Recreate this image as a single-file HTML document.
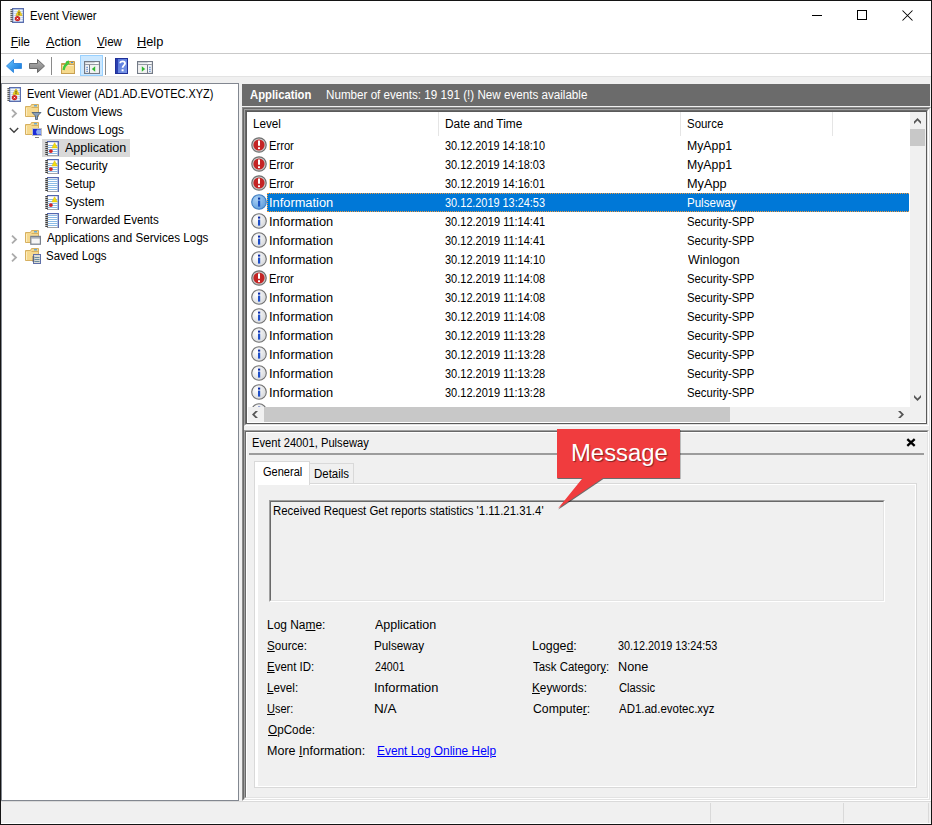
<!DOCTYPE html>
<html><head><meta charset="utf-8">
<style>
*{margin:0;padding:0;box-sizing:border-box}
html,body{width:932px;height:825px;overflow:hidden;background:#fff}
body{position:relative;font-family:"Liberation Sans",sans-serif;font-size:12px;color:#000}
.a{position:absolute}
svg{position:absolute;overflow:visible}
.t{position:absolute;white-space:pre;line-height:14px;transform-origin:0 0}
.ul{text-decoration:underline;text-underline-offset:1px}
</style></head><body>

<!-- ============ window chrome ============ -->
<div class="a" style="left:0;top:0;width:932px;height:825px;border:1px solid #141414"></div>
<!-- title icon -->
<svg style="left:10px;top:8px" width="14" height="15" viewBox="0 0 14 15">
  <rect x="2.6" y="0.6" width="10.8" height="13.8" fill="#c9daf2" stroke="#5a6eae" stroke-width="1.2"/>
  <path d="M3.8 2.5h8.8M3.8 4.5h8.8M3.8 6.5h8.8M3.8 8.5h8.8M3.8 10.5h8.8M3.8 12.5h8.8" stroke="#f2f6fc" stroke-width="1"/>
  <path d="M0.4 1.5h2.2M0.4 3.5h2.2M0.4 5.5h2.2M0.4 7.5h2.2M0.4 9.5h2.2M0.4 11.5h2.2M0.4 13.5h2.2" stroke="#5c5c5c" stroke-width="1"/>
  <path d="M0.4 2.5h2M0.4 4.5h2M0.4 6.5h2M0.4 8.5h2M0.4 10.5h2M0.4 12.5h2" stroke="#c8c8c8" stroke-width="1"/>
  <path d="M9 1.9C9.4 1.9 12.3 7.2 12.1 7.5H5.9C5.7 7.2 8.6 1.9 9 1.9Z" fill="#efcf1a" stroke="#c49e00" stroke-width=".5"/>
  <path d="M9 3.8v1.9" stroke="#3a3a1a" stroke-width="1"/><rect x="8.5" y="6.1" width="1" height=".9" fill="#3a3a1a"/>
  <circle cx="7.5" cy="10.6" r="2.7" fill="#cf2424"/>
  <path d="M6.8 9.9l1.4 1.4M8.2 9.9l-1.4 1.4" stroke="#fff" stroke-width=".9"/>
</svg>
<!-- window controls -->
<div class="a" style="left:812px;top:15px;width:10px;height:1px;background:#000"></div>
<div class="a" style="left:857px;top:10px;width:10px;height:10px;border:1px solid #000"></div>
<svg style="left:902px;top:10px" width="11" height="11" viewBox="0 0 11 11"><path d="M0.5 0.5L10.5 10.5M10.5 0.5L0.5 10.5" stroke="#000" stroke-width="1.05" fill="none"/></svg>

<!-- menu separator -->
<div class="a" style="left:1px;top:53px;width:930px;height:1px;background:#c9c9c9"></div>

<!-- toolbar icons -->
<svg style="left:6px;top:59px" width="17" height="15" viewBox="0 0 17 15">
  <defs><linearGradient id="gb" x1="0" y1="0" x2="1" y2="1"><stop offset="0" stop-color="#6cc7ff"/><stop offset="1" stop-color="#0a6fd6"/></linearGradient></defs>
  <path d="M0.5 7L7.5 0.5V4.5H15.5V9.5H7.5V13.5Z" fill="url(#gb)" stroke="#3b8ee0" stroke-width="1"/>
</svg>
<svg style="left:29px;top:59px" width="17" height="15" viewBox="0 0 17 15">
  <defs><linearGradient id="gg" x1="0" y1="0" x2="0" y2="1"><stop offset="0" stop-color="#b5b5b5"/><stop offset="1" stop-color="#7a7a7a"/></linearGradient></defs>
  <path d="M15.5 7L8.5 0.5V4.5H0.5V9.5H8.5V13.5Z" fill="url(#gg)" stroke="#6a6a6a" stroke-width="1"/>
</svg>
<div class="a" style="left:51px;top:57px;width:1px;height:18px;background:#8a8a8a"></div>
<svg style="left:61px;top:60px" width="15" height="15" viewBox="0 0 15 15">
  <path d="M0.5 3.5H5.5V1.5H13.5V13.5H0.5Z" fill="#e9c56c" stroke="#c39a4c"/>
  <rect x="0.5" y="4.5" width="13" height="9" fill="#f6da8e" stroke="#c8a052"/>
  <path d="M1.5 5.5H12.5" stroke="#fcedc4"/>
  <path d="M10 2.5H12" stroke="#3d8fe0" stroke-width="1.2"/>
  <path d="M2.6 10C3 6.8 4.6 4.6 6.6 3.6" stroke="#3cc83c" stroke-width="2.3" fill="none"/>
  <path d="M4.2 2.6L7.6 0.3L8.6 4.6Z" fill="#3cc83c"/>
</svg>
<div class="a" style="left:80px;top:55px;width:23px;height:21px;background:#cce8ff;border:1px solid #99d1ff"></div>
<svg style="left:84px;top:61px" width="16" height="13" viewBox="0 0 16 13">
  <rect x="0.6" y="0.6" width="14.8" height="11.8" fill="#fff" stroke="#737a86" stroke-width="1.2"/>
  <path d="M1.2 1.7H10.5" stroke="#c8ccd2" stroke-width="1.2"/>
  <path d="M11.5 1.7h1M13.5 1.7h1" stroke="#fff" stroke-width="1"/>
  <path d="M1.2 3.6H14.8" stroke="#8a909a" stroke-width="1"/>
  <path d="M5.5 4V12" stroke="#737a86" stroke-width="1.1"/>
  <path d="M2.3 6.3h1.6M2.3 8.3h1.6M2.3 10.3h1.6" stroke="#3a6fc0" stroke-width="1.1"/>
  <path d="M6.2 4.2H14.8V11.8H6.2Z" fill="#f2f2f2"/>
  <path d="M11.2 5.3V10.8L7.8 8.05Z" fill="#30b830"/>
</svg>
<div class="a" style="left:105px;top:57px;width:1px;height:18px;background:#8a8a8a"></div>
<svg style="left:115px;top:58px" width="13" height="16" viewBox="0 0 13 16">
  <defs><linearGradient id="gh" x1="0" y1="0" x2="1" y2="1"><stop offset="0" stop-color="#4d6fd8"/><stop offset="1" stop-color="#7d9ae8"/></linearGradient></defs>
  <rect x="0" y="0" width="13" height="16" fill="url(#gh)"/>
  <rect x="0" y="0" width="3" height="16" fill="#2a3fb0"/>
  <rect x="0.5" y="0.5" width="12" height="15" fill="none" stroke="#1f2f98" stroke-width="1"/>
  <path d="M5.2 5.2C5.2 2.7 10 2.7 10 5.4C10 7.4 7.6 7.4 7.6 9.8" stroke="#fff" stroke-width="1.8" fill="none"/>
  <rect x="6.6" y="11.3" width="2" height="2" fill="#fff"/>
</svg>
<svg style="left:137px;top:61px" width="16" height="13" viewBox="0 0 16 13">
  <rect x="0.6" y="0.6" width="14.8" height="11.8" fill="#fff" stroke="#737a86" stroke-width="1.2"/>
  <path d="M1.2 1.7H10.5" stroke="#c8ccd2" stroke-width="1.2"/>
  <path d="M11.5 1.7h1M13.5 1.7h1" stroke="#fff" stroke-width="1"/>
  <path d="M1.2 3.6H14.8" stroke="#8a909a" stroke-width="1"/>
  <path d="M10.5 4V12" stroke="#737a86" stroke-width="1.1"/>
  <path d="M12.1 6.3h1.6M12.1 8.3h1.6M12.1 10.3h1.6" stroke="#3a6fc0" stroke-width="1.1"/>
  <path d="M1.2 4.2H9.9V11.8H1.2Z" fill="#f2f2f2"/>
  <path d="M4.8 5.3V10.8L8.2 8.05Z" fill="#30b830"/>
</svg>

<!-- grey client background -->
<div class="a" style="left:1px;top:76px;width:930px;height:748px;background:#f0f0f0"></div>
<div class="a" style="left:1px;top:76px;width:930px;height:1px;background:#e3e3e3"></div>

<!-- ============ tree pane ============ -->
<div class="a" style="left:1px;top:83px;width:238px;height:718px;border:1px solid #828790;background:#fff"></div>
<div class="a" style="left:42px;top:139px;width:88px;height:18px;background:#d9d9d9"></div>
<!-- root icon -->
<svg style="left:7px;top:87px" width="14" height="15" viewBox="0 0 14 15">
  <rect x="2.6" y="0.6" width="10.8" height="13.8" fill="#c9daf2" stroke="#5a6eae" stroke-width="1.2"/>
  <path d="M3.8 2.5h8.8M3.8 4.5h8.8M3.8 6.5h8.8M3.8 8.5h8.8M3.8 10.5h8.8M3.8 12.5h8.8" stroke="#f2f6fc" stroke-width="1"/>
  <path d="M0.4 1.5h2.2M0.4 3.5h2.2M0.4 5.5h2.2M0.4 7.5h2.2M0.4 9.5h2.2M0.4 11.5h2.2M0.4 13.5h2.2" stroke="#5c5c5c" stroke-width="1"/>
  <path d="M0.4 2.5h2M0.4 4.5h2M0.4 6.5h2M0.4 8.5h2M0.4 10.5h2M0.4 12.5h2" stroke="#c8c8c8" stroke-width="1"/>
  <path d="M9 1.9C9.4 1.9 12.3 7.2 12.1 7.5H5.9C5.7 7.2 8.6 1.9 9 1.9Z" fill="#efcf1a" stroke="#c49e00" stroke-width=".5"/>
  <path d="M9 3.8v1.9" stroke="#3a3a1a" stroke-width="1"/><rect x="8.5" y="6.1" width="1" height=".9" fill="#3a3a1a"/>
  <circle cx="7.5" cy="10.6" r="2.7" fill="#cf2424"/>
  <path d="M6.8 9.9l1.4 1.4M8.2 9.9l-1.4 1.4" stroke="#fff" stroke-width=".9"/>
</svg>
<!-- chevrons -->
<svg style="left:11px;top:109px" width="7" height="9" viewBox="0 0 7 9"><path d="M1 0.7L5 4.5L1 8.3" stroke="#ababab" stroke-width="1.8" fill="none"/></svg>
<svg style="left:9px;top:127px" width="10" height="7" viewBox="0 0 10 7"><path d="M0.8 1L5 5.2L9.2 1" stroke="#404040" stroke-width="1.4" fill="none"/></svg>
<svg style="left:11px;top:235px" width="7" height="9" viewBox="0 0 7 9"><path d="M1 0.7L5 4.5L1 8.3" stroke="#ababab" stroke-width="1.8" fill="none"/></svg>
<svg style="left:11px;top:253px" width="7" height="9" viewBox="0 0 7 9"><path d="M1 0.7L5 4.5L1 8.3" stroke="#ababab" stroke-width="1.8" fill="none"/></svg>
<!-- folders -->
<svg style="left:25px;top:104px" width="17" height="17" viewBox="0 0 17 17">
  <path d="M0.5 2.5H5.5L6.5 0.5H13.5V12.5H0.5Z" fill="#f6d98e" stroke="#d6b060"/>
  <path d="M6.5 3.5H13.5" stroke="#d6b060"/><path d="M9 1.8H12" stroke="#4a9ee0" stroke-width="1.2"/>
  <path d="M1.5 4V12" stroke="#fcecc0"/>
  <path d="M7 8.5H16L12.5 12V15.5H10.5V12Z" fill="#8aa0b8" stroke="#4f6378" stroke-width=".9"/>
</svg>
<svg style="left:25px;top:122px" width="17" height="17" viewBox="0 0 17 17">
  <path d="M0.5 2.5H5.5L6.5 0.5H13.5V12.5H0.5Z" fill="#f6d98e" stroke="#d6b060"/>
  <path d="M6.5 3.5H13.5" stroke="#d6b060"/><path d="M9 1.8H12" stroke="#4a9ee0" stroke-width="1.2"/>
  <path d="M1.5 4V12" stroke="#fcecc0"/>
  <rect x="7.5" y="6.5" width="9" height="7" fill="#1a2ad8" stroke="#c0c0c0"/>
  <path d="M12 7.5H16V12.5H12L11 10Z" fill="#8aa8f0"/>
  <path d="M10 15.5H14" stroke="#808080"/>
</svg>
<svg style="left:25px;top:230px" width="17" height="17" viewBox="0 0 17 17">
  <path d="M0.5 2.5H5.5L6.5 0.5H13.5V12.5H0.5Z" fill="#f6d98e" stroke="#d6b060"/>
  <path d="M6.5 3.5H13.5" stroke="#d6b060"/><path d="M9 1.8H12" stroke="#4a9ee0" stroke-width="1.2"/>
  <path d="M1.5 4V12" stroke="#fcecc0"/>
  <rect x="5.8" y="6.4" width="9.6" height="7.8" fill="#f6f6f6" stroke="#79808c" stroke-width="1.2"/>
  <path d="M6.4 7.9H15" stroke="#79808c" stroke-width="1"/>
</svg>
<svg style="left:25px;top:248px" width="17" height="17" viewBox="0 0 17 17">
  <path d="M0.5 2.5H5.5L6.5 0.5H13.5V12.5H0.5Z" fill="#f6d98e" stroke="#d6b060"/>
  <path d="M6.5 3.5H13.5" stroke="#d6b060"/><path d="M9 1.8H12" stroke="#4a9ee0" stroke-width="1.2"/>
  <path d="M1.5 4V12" stroke="#fcecc0"/>
  <rect x="8.5" y="6.5" width="7" height="9" fill="#dcdcd4" stroke="#5f6fa8"/>
  <path d="M9.5 9.5h5M9.5 11.5h5M9.5 13.5h5" stroke="#6a8ca0"/>
  <path d="M7.3 9h2M7.3 11h2M7.3 13h2" stroke="#5a5a5a"/>
</svg>
<!-- log icons -->
<svg style="left:45px;top:141px" width="14" height="15" viewBox="0 0 14 15">
  <rect x="2" y="0" width="11" height="15" fill="#fff"/>
  <rect x="2" y="0" width="12" height="1.2" fill="#5266b0"/>
  <rect x="12.6" y="0" width="1.4" height="15" fill="#5a6cb4"/>
  <rect x="2" y="14" width="11" height="1" fill="#a0a4ac"/>
  <rect x="2" y="1" width="1" height="14" fill="#8a8a8a"/>
  <path d="M0.3 1.5h2.4M0.3 3.5h2.4M0.3 5.5h2.4M0.3 7.5h2.4M0.3 9.5h2.4M0.3 11.5h2.4M0.3 13.5h2.4" stroke="#3c3c3c" stroke-width="1"/>
  <path d="M0.3 2.5h2M0.3 4.5h2M0.3 6.5h2M0.3 8.5h2M0.3 10.5h2M0.3 12.5h2" stroke="#b8b8b8" stroke-width="1"/>
  <path d="M3 4.5h9.5M3 6.5h9.5M3 8.5h9.5M3 10.5h9.5M3 12.5h9.5" stroke="#8cbbe6" stroke-width="1"/>
  <path d="M9.6 1.7L12.3 6.9H6.9Z" fill="#f2de12" stroke="#d8b800" stroke-width=".5"/>
  <circle cx="5.9" cy="10.1" r="1.9" fill="#d42222"/>
</svg>
<svg style="left:45px;top:159px" width="14" height="15" viewBox="0 0 14 15">
  <rect x="2" y="0" width="11" height="15" fill="#fff"/>
  <rect x="2" y="0" width="12" height="1.2" fill="#5266b0"/>
  <rect x="12.6" y="0" width="1.4" height="15" fill="#5a6cb4"/>
  <rect x="2" y="14" width="11" height="1" fill="#a0a4ac"/>
  <rect x="2" y="1" width="1" height="14" fill="#8a8a8a"/>
  <path d="M0.3 1.5h2.4M0.3 3.5h2.4M0.3 5.5h2.4M0.3 7.5h2.4M0.3 9.5h2.4M0.3 11.5h2.4M0.3 13.5h2.4" stroke="#3c3c3c" stroke-width="1"/>
  <path d="M0.3 2.5h2M0.3 4.5h2M0.3 6.5h2M0.3 8.5h2M0.3 10.5h2M0.3 12.5h2" stroke="#b8b8b8" stroke-width="1"/>
  <path d="M3 4.5h9.5M3 6.5h9.5M3 8.5h9.5M3 10.5h9.5M3 12.5h9.5" stroke="#8cbbe6" stroke-width="1"/>
  <path d="M9.6 1.7L12.3 6.9H6.9Z" fill="#f2de12" stroke="#d8b800" stroke-width=".5"/>
  <circle cx="5.9" cy="10.1" r="1.9" fill="#d42222"/>
</svg>
<svg style="left:45px;top:177px" width="14" height="15" viewBox="0 0 14 15">
  <rect x="2" y="0" width="11" height="15" fill="#fff"/>
  <rect x="2" y="0" width="12" height="1.2" fill="#5266b0"/>
  <rect x="12.6" y="0" width="1.4" height="15" fill="#5a6cb4"/>
  <rect x="2" y="14" width="11" height="1" fill="#a0a4ac"/>
  <rect x="2" y="1" width="1" height="14" fill="#8a8a8a"/>
  <path d="M0.3 1.5h2.4M0.3 3.5h2.4M0.3 5.5h2.4M0.3 7.5h2.4M0.3 9.5h2.4M0.3 11.5h2.4M0.3 13.5h2.4" stroke="#3c3c3c" stroke-width="1"/>
  <path d="M0.3 2.5h2M0.3 4.5h2M0.3 6.5h2M0.3 8.5h2M0.3 10.5h2M0.3 12.5h2" stroke="#b8b8b8" stroke-width="1"/>
  <path d="M3 2.5h9.5M3 4.5h9.5M3 6.5h9.5M3 8.5h9.5M3 10.5h9.5M3 12.5h9.5" stroke="#8cbbe6" stroke-width="1"/>
</svg>
<svg style="left:45px;top:195px" width="14" height="15" viewBox="0 0 14 15">
  <rect x="2" y="0" width="11" height="15" fill="#fff"/>
  <rect x="2" y="0" width="12" height="1.2" fill="#5266b0"/>
  <rect x="12.6" y="0" width="1.4" height="15" fill="#5a6cb4"/>
  <rect x="2" y="14" width="11" height="1" fill="#a0a4ac"/>
  <rect x="2" y="1" width="1" height="14" fill="#8a8a8a"/>
  <path d="M0.3 1.5h2.4M0.3 3.5h2.4M0.3 5.5h2.4M0.3 7.5h2.4M0.3 9.5h2.4M0.3 11.5h2.4M0.3 13.5h2.4" stroke="#3c3c3c" stroke-width="1"/>
  <path d="M0.3 2.5h2M0.3 4.5h2M0.3 6.5h2M0.3 8.5h2M0.3 10.5h2M0.3 12.5h2" stroke="#b8b8b8" stroke-width="1"/>
  <path d="M3 4.5h9.5M3 6.5h9.5M3 8.5h9.5M3 10.5h9.5M3 12.5h9.5" stroke="#8cbbe6" stroke-width="1"/>
  <path d="M9.6 1.7L12.3 6.9H6.9Z" fill="#f2de12" stroke="#d8b800" stroke-width=".5"/>
  <circle cx="5.9" cy="10.1" r="1.9" fill="#d42222"/>
</svg>
<svg style="left:45px;top:213px" width="14" height="15" viewBox="0 0 14 15">
  <rect x="2" y="0" width="11" height="15" fill="#fff"/>
  <rect x="2" y="0" width="12" height="1.2" fill="#5266b0"/>
  <rect x="12.6" y="0" width="1.4" height="15" fill="#5a6cb4"/>
  <rect x="2" y="14" width="11" height="1" fill="#a0a4ac"/>
  <rect x="2" y="1" width="1" height="14" fill="#8a8a8a"/>
  <path d="M0.3 1.5h2.4M0.3 3.5h2.4M0.3 5.5h2.4M0.3 7.5h2.4M0.3 9.5h2.4M0.3 11.5h2.4M0.3 13.5h2.4" stroke="#3c3c3c" stroke-width="1"/>
  <path d="M0.3 2.5h2M0.3 4.5h2M0.3 6.5h2M0.3 8.5h2M0.3 10.5h2M0.3 12.5h2" stroke="#b8b8b8" stroke-width="1"/>
  <path d="M3 2.5h9.5M3 4.5h9.5M3 6.5h9.5M3 8.5h9.5M3 10.5h9.5M3 12.5h9.5" stroke="#8cbbe6" stroke-width="1"/>
</svg>

<!-- ============ right header ============ -->
<div class="a" style="left:242px;top:84px;width:688px;height:22px;background:#6b6b6b"></div>

<!-- ============ list frame ============ -->
<!-- container sunken edge x=242..930, y=107..800 -->
<div class="a" style="left:242px;top:107px;width:689px;height:694px;border-style:solid;border-width:1px;border-color:#8a8a8a #fff #fff #8a8a8a"></div>
<div class="a" style="left:243px;top:108px;width:687px;height:692px;border-style:solid;border-width:1px;border-color:#696969 #e3e3e3 #e3e3e3 #696969"></div>
<!-- list sunken edge x=244..928, y=109..425 -->
<div class="a" style="left:244px;top:109px;width:685px;height:317px;border-style:solid;border-width:1px;border-color:#a0a0a0 #fff #fff #a0a0a0"></div>
<div class="a" style="left:245px;top:110px;width:683px;height:315px;border-style:solid;border-width:1px;border-color:#696969 #e3e3e3 #e3e3e3 #696969"></div>
<div class="a" style="left:246px;top:111px;width:681px;height:313px;border:1px solid #5a5a5a;background:#fff"></div>
<!-- column separators -->
<div class="a" style="left:438px;top:112px;width:1px;height:24px;background:#e5e5e5"></div>
<div class="a" style="left:680px;top:112px;width:1px;height:24px;background:#e5e5e5"></div>
<div class="a" style="left:832px;top:112px;width:1px;height:24px;background:#e5e5e5"></div>
<!-- selected row -->
<div class="a" style="left:267px;top:193px;width:642px;height:19px;background:#0078d7;border:1px dotted #f39a3c;border-right:none"></div>
<!-- row icons -->
<div class="a" style="left:247px;top:112px;width:662px;height:295px;overflow:hidden"><svg style="left:4px;top:25px" width="16" height="16" viewBox="0 0 16 16">
<circle cx="8" cy="8" r="7.2" fill="#c9cccc" stroke="#6e6e6e" stroke-width="1.2"/>
<circle cx="8" cy="8" r="5.6" fill="#c42424"/>
<path d="M8 3.6V8.8" stroke="#fff" stroke-width="2"/><rect x="7" y="10.3" width="2" height="1.8" fill="#fff"/>
</svg>
<svg style="left:4px;top:44px" width="16" height="16" viewBox="0 0 16 16">
<circle cx="8" cy="8" r="7.2" fill="#c9cccc" stroke="#6e6e6e" stroke-width="1.2"/>
<circle cx="8" cy="8" r="5.6" fill="#c42424"/>
<path d="M8 3.6V8.8" stroke="#fff" stroke-width="2"/><rect x="7" y="10.3" width="2" height="1.8" fill="#fff"/>
</svg>
<svg style="left:4px;top:63px" width="16" height="16" viewBox="0 0 16 16">
<circle cx="8" cy="8" r="7.2" fill="#c9cccc" stroke="#6e6e6e" stroke-width="1.2"/>
<circle cx="8" cy="8" r="5.6" fill="#c42424"/>
<path d="M8 3.6V8.8" stroke="#fff" stroke-width="2"/><rect x="7" y="10.3" width="2" height="1.8" fill="#fff"/>
</svg>
<svg style="left:4px;top:82px" width="16" height="16" viewBox="0 0 16 16">
<defs><radialGradient id="rsel" cx=".35" cy=".3" r=".8"><stop offset="0" stop-color="#a9d0f5"/><stop offset="1" stop-color="#5d9bd9"/></radialGradient></defs>
<circle cx="8" cy="8" r="7.3" fill="url(#rsel)" stroke="#3d7cc0" stroke-width="1.1"/>
<rect x="7" y="3.6" width="2.2" height="2" fill="#0a3aa8"/><rect x="7" y="6.6" width="2.2" height="6" fill="#1a50c0"/>
</svg>
<svg style="left:4px;top:101px" width="16" height="16" viewBox="0 0 16 16">
<defs><radialGradient id="ri4" cx=".35" cy=".35" r=".8"><stop offset="0" stop-color="#ffffff"/><stop offset="1" stop-color="#cfd2d6"/></radialGradient></defs>
<circle cx="8" cy="8" r="7.3" fill="url(#ri4)" stroke="#707070" stroke-width="1.1"/>
<rect x="7" y="3.6" width="2.2" height="2" fill="#0a2aa8"/><rect x="7" y="6.6" width="2.2" height="6" fill="#1f4fc8"/>
</svg>
<svg style="left:4px;top:120px" width="16" height="16" viewBox="0 0 16 16">
<defs><radialGradient id="ri5" cx=".35" cy=".35" r=".8"><stop offset="0" stop-color="#ffffff"/><stop offset="1" stop-color="#cfd2d6"/></radialGradient></defs>
<circle cx="8" cy="8" r="7.3" fill="url(#ri5)" stroke="#707070" stroke-width="1.1"/>
<rect x="7" y="3.6" width="2.2" height="2" fill="#0a2aa8"/><rect x="7" y="6.6" width="2.2" height="6" fill="#1f4fc8"/>
</svg>
<svg style="left:4px;top:139px" width="16" height="16" viewBox="0 0 16 16">
<defs><radialGradient id="ri6" cx=".35" cy=".35" r=".8"><stop offset="0" stop-color="#ffffff"/><stop offset="1" stop-color="#cfd2d6"/></radialGradient></defs>
<circle cx="8" cy="8" r="7.3" fill="url(#ri6)" stroke="#707070" stroke-width="1.1"/>
<rect x="7" y="3.6" width="2.2" height="2" fill="#0a2aa8"/><rect x="7" y="6.6" width="2.2" height="6" fill="#1f4fc8"/>
</svg>
<svg style="left:4px;top:158px" width="16" height="16" viewBox="0 0 16 16">
<circle cx="8" cy="8" r="7.2" fill="#c9cccc" stroke="#6e6e6e" stroke-width="1.2"/>
<circle cx="8" cy="8" r="5.6" fill="#c42424"/>
<path d="M8 3.6V8.8" stroke="#fff" stroke-width="2"/><rect x="7" y="10.3" width="2" height="1.8" fill="#fff"/>
</svg>
<svg style="left:4px;top:177px" width="16" height="16" viewBox="0 0 16 16">
<defs><radialGradient id="ri8" cx=".35" cy=".35" r=".8"><stop offset="0" stop-color="#ffffff"/><stop offset="1" stop-color="#cfd2d6"/></radialGradient></defs>
<circle cx="8" cy="8" r="7.3" fill="url(#ri8)" stroke="#707070" stroke-width="1.1"/>
<rect x="7" y="3.6" width="2.2" height="2" fill="#0a2aa8"/><rect x="7" y="6.6" width="2.2" height="6" fill="#1f4fc8"/>
</svg>
<svg style="left:4px;top:196px" width="16" height="16" viewBox="0 0 16 16">
<defs><radialGradient id="ri9" cx=".35" cy=".35" r=".8"><stop offset="0" stop-color="#ffffff"/><stop offset="1" stop-color="#cfd2d6"/></radialGradient></defs>
<circle cx="8" cy="8" r="7.3" fill="url(#ri9)" stroke="#707070" stroke-width="1.1"/>
<rect x="7" y="3.6" width="2.2" height="2" fill="#0a2aa8"/><rect x="7" y="6.6" width="2.2" height="6" fill="#1f4fc8"/>
</svg>
<svg style="left:4px;top:215px" width="16" height="16" viewBox="0 0 16 16">
<defs><radialGradient id="ri10" cx=".35" cy=".35" r=".8"><stop offset="0" stop-color="#ffffff"/><stop offset="1" stop-color="#cfd2d6"/></radialGradient></defs>
<circle cx="8" cy="8" r="7.3" fill="url(#ri10)" stroke="#707070" stroke-width="1.1"/>
<rect x="7" y="3.6" width="2.2" height="2" fill="#0a2aa8"/><rect x="7" y="6.6" width="2.2" height="6" fill="#1f4fc8"/>
</svg>
<svg style="left:4px;top:234px" width="16" height="16" viewBox="0 0 16 16">
<defs><radialGradient id="ri11" cx=".35" cy=".35" r=".8"><stop offset="0" stop-color="#ffffff"/><stop offset="1" stop-color="#cfd2d6"/></radialGradient></defs>
<circle cx="8" cy="8" r="7.3" fill="url(#ri11)" stroke="#707070" stroke-width="1.1"/>
<rect x="7" y="3.6" width="2.2" height="2" fill="#0a2aa8"/><rect x="7" y="6.6" width="2.2" height="6" fill="#1f4fc8"/>
</svg>
<svg style="left:4px;top:253px" width="16" height="16" viewBox="0 0 16 16">
<defs><radialGradient id="ri12" cx=".35" cy=".35" r=".8"><stop offset="0" stop-color="#ffffff"/><stop offset="1" stop-color="#cfd2d6"/></radialGradient></defs>
<circle cx="8" cy="8" r="7.3" fill="url(#ri12)" stroke="#707070" stroke-width="1.1"/>
<rect x="7" y="3.6" width="2.2" height="2" fill="#0a2aa8"/><rect x="7" y="6.6" width="2.2" height="6" fill="#1f4fc8"/>
</svg>
<svg style="left:4px;top:272px" width="16" height="16" viewBox="0 0 16 16">
<defs><radialGradient id="ri13" cx=".35" cy=".35" r=".8"><stop offset="0" stop-color="#ffffff"/><stop offset="1" stop-color="#cfd2d6"/></radialGradient></defs>
<circle cx="8" cy="8" r="7.3" fill="url(#ri13)" stroke="#707070" stroke-width="1.1"/>
<rect x="7" y="3.6" width="2.2" height="2" fill="#0a2aa8"/><rect x="7" y="6.6" width="2.2" height="6" fill="#1f4fc8"/>
</svg>
<svg style="left:4px;top:291px" width="16" height="16" viewBox="0 0 16 16">
<defs><radialGradient id="ri14" cx=".35" cy=".35" r=".8"><stop offset="0" stop-color="#ffffff"/><stop offset="1" stop-color="#cfd2d6"/></radialGradient></defs>
<circle cx="8" cy="8" r="7.3" fill="url(#ri14)" stroke="#707070" stroke-width="1.1"/>
<rect x="7" y="3.6" width="2.2" height="2" fill="#0a2aa8"/><rect x="7" y="6.6" width="2.2" height="6" fill="#1f4fc8"/>
</svg></div>
<!-- v scrollbar -->
<div class="a" style="left:910px;top:112px;width:16px;height:295px;background:#f0f0f0"></div>
<div class="a" style="left:910px;top:129px;width:15px;height:17px;background:#c8c8c8"></div>
<svg style="left:914px;top:118px" width="7" height="6" viewBox="0 0 7 6"><path d="M0 6L3.5 2.5L7 6V3.5L3.5 0L0 3.5Z" fill="#555"/></svg>
<svg style="left:914px;top:395px" width="7" height="6" viewBox="0 0 7 6"><path d="M0 0L3.5 3.5L7 0V2.5L3.5 6L0 2.5Z" fill="#555"/></svg>
<!-- h scrollbar -->
<div class="a" style="left:248px;top:407px;width:678px;height:15px;background:#f0f0f0"></div>
<div class="a" style="left:264px;top:407px;width:466px;height:15px;background:#c8c8c8"></div>
<svg style="left:252px;top:411px" width="6" height="7" viewBox="0 0 6 7"><path d="M6 0L2.5 3.5L6 7H3.5L0 3.5L3.5 0Z" fill="#555"/></svg>
<svg style="left:898px;top:411px" width="6" height="7" viewBox="0 0 6 7"><path d="M0 0L3.5 3.5L0 7H2.5L6 3.5L2.5 0Z" fill="#555"/></svg>

<!-- ============ detail pane ============ -->
<div class="a" style="left:244px;top:430px;width:685px;height:369px;border-style:solid;border-width:1px;border-color:#a0a0a0 #fff #fff #a0a0a0"></div>
<div class="a" style="left:245px;top:431px;width:683px;height:367px;border-style:solid;border-width:1px;border-color:#696969 #e3e3e3 #e3e3e3 #696969"></div>
<div class="a" style="left:246px;top:432px;width:681px;height:365px;border-style:solid;border-width:1px 0 0 1px;border-color:#fff"></div>
<div class="a" style="left:249px;top:453px;width:675px;height:2px;background:#9c9c9c"></div>
<svg style="left:906px;top:437.6px" width="10" height="9" viewBox="0 0 10 9"><path d="M1.3 1.1L8.7 7.9M8.7 1.1L1.3 7.9" stroke="#000" stroke-width="2.3" fill="none"/></svg>
<!-- tab page -->
<div class="a" style="left:254px;top:483px;width:663px;height:305px;border:1px solid #d9d9d9;background:#fff"></div>
<div class="a" style="left:258px;top:485px;width:657px;height:301px;background:#f0f0f0"></div>
<!-- tabs -->
<div class="a" style="left:309px;top:463px;width:45px;height:21px;border:1px solid #d9d9d9;border-left:none;background:#f0f0f0"></div>
<div class="a" style="left:254px;top:461px;width:56px;height:24px;border:1px solid #d9d9d9;border-bottom:none;background:#fff"></div>
<!-- message box -->
<div class="a" style="left:269px;top:500px;width:616px;height:102px;border-style:solid;border-width:1px;border-color:#a0a0a0 #fff #fff #a0a0a0"></div>
<div class="a" style="left:270px;top:501px;width:614px;height:100px;border-style:solid;border-width:1px;border-color:#696969 #e3e3e3 #e3e3e3 #696969"></div>

<!-- ============ status bar ============ -->
<div class="a" style="left:1px;top:801px;width:930px;height:1px;background:#dadada"></div>
<div class="a" style="left:1px;top:823px;width:930px;height:1px;background:#fff"></div>
<div class="a" style="left:710px;top:803px;width:1px;height:20px;background:#d9d9d9"></div>
<div class="a" style="left:843px;top:803px;width:1px;height:20px;background:#d9d9d9"></div>
<div class="a" style="left:928px;top:803px;width:1px;height:20px;background:#d9d9d9"></div>

<!-- ============ texts ============ -->
<div class="t" style="left:29.96px;top:9px;transform:scaleX(0.943);">Event Viewer</div>
<div class="t" style="left:10.70px;top:35px;"><span class="ul">F</span>ile</div>
<div class="t" style="left:45.70px;top:35px;transform:scaleX(1.052);"><span class="ul">A</span>ction</div>
<div class="t" style="left:96.70px;top:35px;transform:scaleX(0.969);"><span class="ul">V</span>iew</div>
<div class="t" style="left:136.63px;top:35px;transform:scaleX(1.065);"><span class="ul">H</span>elp</div>
<div class="t" style="left:26.79px;top:87px;transform:scaleX(0.911);">Event Viewer (AD1.AD.EVOTEC.XYZ)</div>
<div class="t" style="left:46.70px;top:105px;transform:scaleX(0.987);">Custom Views</div>
<div class="t" style="left:46.70px;top:123px;transform:scaleX(0.987);">Windows Logs</div>
<div class="t" style="left:64.90px;top:141px;transform:scaleX(1.043);">Application</div>
<div class="t" style="left:64.72px;top:159px;transform:scaleX(0.983);">Security</div>
<div class="t" style="left:64.73px;top:177px;transform:scaleX(0.967);">Setup</div>
<div class="t" style="left:64.72px;top:195px;transform:scaleX(0.982);">System</div>
<div class="t" style="left:64.74px;top:213px;transform:scaleX(0.964);">Forwarded Events</div>
<div class="t" style="left:46.70px;top:231px;transform:scaleX(0.968);">Applications and Services Logs</div>
<div class="t" style="left:45.75px;top:249px;transform:scaleX(0.955);">Saved Logs</div>
<div class="t" style="left:249.70px;top:88px;font-weight:700;color:#fff;transform:scaleX(0.938);">Application</div>
<div class="t" style="left:326.23px;top:88px;color:#fff;transform:scaleX(0.970);">Number of events: 19 191 (!) New events available</div>
<div class="t" style="left:253.23px;top:117px;transform:scaleX(0.974);">Level</div>
<div class="t" style="left:444.71px;top:117px;transform:scaleX(0.991);">Date and Time</div>
<div class="t" style="left:687.35px;top:117px;transform:scaleX(0.954);">Source</div>
<div class="t" style="left:269.27px;top:139px;transform:scaleX(0.931);">Error</div>
<div class="t" style="left:444.79px;top:139px;transform:scaleX(0.908);">30.12.2019 14:18:10</div>
<div class="t" style="left:687.18px;top:139px;transform:scaleX(1.023);">MyApp1</div>
<div class="t" style="left:269.27px;top:158px;transform:scaleX(0.931);">Error</div>
<div class="t" style="left:444.79px;top:158px;transform:scaleX(0.908);">30.12.2019 14:18:03</div>
<div class="t" style="left:687.18px;top:158px;transform:scaleX(1.023);">MyApp1</div>
<div class="t" style="left:269.27px;top:177px;transform:scaleX(0.931);">Error</div>
<div class="t" style="left:444.79px;top:177px;transform:scaleX(0.908);">30.12.2019 14:16:01</div>
<div class="t" style="left:687.14px;top:177px;transform:scaleX(1.058);">MyApp</div>
<div class="t" style="left:269.13px;top:196px;color:#fff;transform:scaleX(1.069);">Information</div>
<div class="t" style="left:444.79px;top:196px;color:#fff;transform:scaleX(0.908);">30.12.2019 13:24:53</div>
<div class="t" style="left:687.24px;top:196px;color:#fff;transform:scaleX(0.962);">Pulseway</div>
<div class="t" style="left:269.13px;top:215px;transform:scaleX(1.069);">Information</div>
<div class="t" style="left:444.78px;top:215px;transform:scaleX(0.917);">30.12.2019 11:14:41</div>
<div class="t" style="left:687.26px;top:215px;transform:scaleX(0.943);">Security-SPP</div>
<div class="t" style="left:269.13px;top:234px;transform:scaleX(1.069);">Information</div>
<div class="t" style="left:444.78px;top:234px;transform:scaleX(0.917);">30.12.2019 11:14:41</div>
<div class="t" style="left:687.26px;top:234px;transform:scaleX(0.943);">Security-SPP</div>
<div class="t" style="left:269.13px;top:253px;transform:scaleX(1.069);">Information</div>
<div class="t" style="left:444.78px;top:253px;transform:scaleX(0.917);">30.12.2019 11:14:10</div>
<div class="t" style="left:688.20px;top:253px;transform:scaleX(1.035);">Winlogon</div>
<div class="t" style="left:269.27px;top:272px;transform:scaleX(0.931);">Error</div>
<div class="t" style="left:444.78px;top:272px;transform:scaleX(0.917);">30.12.2019 11:14:08</div>
<div class="t" style="left:687.26px;top:272px;transform:scaleX(0.943);">Security-SPP</div>
<div class="t" style="left:269.13px;top:291px;transform:scaleX(1.069);">Information</div>
<div class="t" style="left:444.78px;top:291px;transform:scaleX(0.917);">30.12.2019 11:14:08</div>
<div class="t" style="left:687.26px;top:291px;transform:scaleX(0.943);">Security-SPP</div>
<div class="t" style="left:269.13px;top:310px;transform:scaleX(1.069);">Information</div>
<div class="t" style="left:444.78px;top:310px;transform:scaleX(0.917);">30.12.2019 11:14:08</div>
<div class="t" style="left:687.26px;top:310px;transform:scaleX(0.943);">Security-SPP</div>
<div class="t" style="left:269.13px;top:329px;transform:scaleX(1.069);">Information</div>
<div class="t" style="left:444.78px;top:329px;transform:scaleX(0.917);">30.12.2019 11:13:28</div>
<div class="t" style="left:687.26px;top:329px;transform:scaleX(0.943);">Security-SPP</div>
<div class="t" style="left:269.13px;top:348px;transform:scaleX(1.069);">Information</div>
<div class="t" style="left:444.78px;top:348px;transform:scaleX(0.917);">30.12.2019 11:13:28</div>
<div class="t" style="left:687.26px;top:348px;transform:scaleX(0.943);">Security-SPP</div>
<div class="t" style="left:269.13px;top:367px;transform:scaleX(1.069);">Information</div>
<div class="t" style="left:444.78px;top:367px;transform:scaleX(0.917);">30.12.2019 11:13:28</div>
<div class="t" style="left:687.26px;top:367px;transform:scaleX(0.943);">Security-SPP</div>
<div class="t" style="left:269.13px;top:386px;transform:scaleX(1.069);">Information</div>
<div class="t" style="left:444.78px;top:386px;transform:scaleX(0.917);">30.12.2019 11:13:28</div>
<div class="t" style="left:687.26px;top:386px;transform:scaleX(0.943);">Security-SPP</div>
<div class="t" style="left:252.17px;top:436px;transform:scaleX(0.931);">Event 24001, Pulseway</div>
<div class="t" style="left:263.40px;top:465px;transform:scaleX(0.919);">General</div>
<div class="t" style="left:314.34px;top:467px;transform:scaleX(0.956);">Details</div>
<div class="t" style="left:272.75px;top:504px;transform:scaleX(0.951);">Received Request Get reports statistics &#39;1.11.21.31.4&#39;</div>
<div class="t" style="left:267.21px;top:618px;transform:scaleX(0.995);">Log Na<span class="ul">m</span>e:</div>
<div class="t" style="left:374.90px;top:618px;transform:scaleX(1.043);">Application</div>
<div class="t" style="left:267.23px;top:639px;transform:scaleX(0.967);"><span class="ul">S</span>ource:</div>
<div class="t" style="left:373.92px;top:639px;transform:scaleX(0.978);">Pulseway</div>
<div class="t" style="left:267.24px;top:660px;transform:scaleX(0.955);"><span class="ul">E</span>vent ID:</div>
<div class="t" style="left:374.90px;top:660px;transform:scaleX(0.885);">24001</div>
<div class="t" style="left:267.23px;top:681px;transform:scaleX(0.973);"><span class="ul">L</span>evel:</div>
<div class="t" style="left:373.83px;top:681px;transform:scaleX(1.072);">Information</div>
<div class="t" style="left:267.29px;top:702px;transform:scaleX(0.915);"><span class="ul">U</span>ser:</div>
<div class="t" style="left:373.77px;top:702px;transform:scaleX(1.126);">N/A</div>
<div class="t" style="left:268.20px;top:723px;transform:scaleX(0.977);"><span class="ul">O</span>pCode:</div>
<div class="t" style="left:267.16px;top:744px;transform:scaleX(1.043);">More <span class="ul">I</span>nformation:</div>
<div class="t" style="left:376.91px;top:744px;color:#0000ff;transform:scaleX(0.991);"><span style="text-decoration:underline">Event Log Online Help</span></div>
<div class="t" style="left:532.17px;top:639px;transform:scaleX(1.032);">Logge<span class="ul">d</span>:</div>
<div class="t" style="left:618.10px;top:639px;transform:scaleX(0.902);">30.12.2019 13:24:53</div>
<div class="t" style="left:533.20px;top:660px;transform:scaleX(0.951);">Task Categor<span class="ul">y</span>:</div>
<div class="t" style="left:617.94px;top:660px;transform:scaleX(1.056);">None</div>
<div class="t" style="left:532.22px;top:681px;transform:scaleX(0.981);"><span class="ul">K</span>eywords:</div>
<div class="t" style="left:619.00px;top:681px;transform:scaleX(0.932);">Classic</div>
<div class="t" style="left:533.20px;top:702px;transform:scaleX(1.022);">Compute<span class="ul">r</span>:</div>
<div class="t" style="left:619.00px;top:702px;transform:scaleX(0.955);">AD1.ad.evotec.xyz</div>

<!-- ============ callout ============ -->
<svg style="left:555px;top:427px" width="130" height="85" viewBox="0 0 130 85">
  <path d="M2 2H125V51H48L3 81.6L27.7 51H2Z" fill="rgba(0,0,0,.55)" transform="translate(0.4,1)"/>
  <path d="M2 2H125V51H48L3 81.6L27.7 51H2Z" fill="#f03c3e"/>
</svg>
<div class="t" style="left:571.13px;top:440px;font-size:23px;line-height:26px;color:#fff;transform:scaleX(1.037);text-shadow:1px 1px 1px rgba(0,0,0,.45);">Message</div>
</body></html>
